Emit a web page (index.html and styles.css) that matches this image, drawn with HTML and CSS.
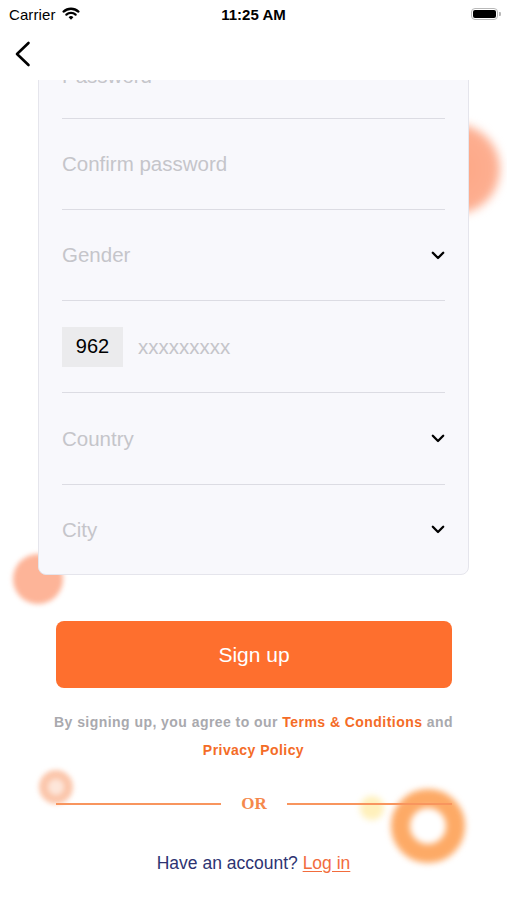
FILE: index.html
```html
<!DOCTYPE html>
<html lang="en">
<head>
<meta charset="utf-8">
<title>Sign up</title>
<link rel="stylesheet" href="styles.css">
</head>
<body>
<div class="page">
  <header class="top">
    <div class="status">
      <div class="status-left">
        <span class="carrier">Carrier</span>
        <svg class="wifi" width="18" height="13" viewBox="0 0 18 13">
          <path d="M1.6 4.6 A11 11 0 0 1 16.4 4.6" fill="none" stroke="#000" stroke-width="2.3" stroke-linecap="round"/>
          <path d="M4.4 7.6 A6.8 6.8 0 0 1 13.6 7.6" fill="none" stroke="#000" stroke-width="2.3" stroke-linecap="round"/>
          <path d="M6.6 10.2 A3.4 3.4 0 0 1 11.4 10.2 L9 12.8 Z" fill="#000"/>
        </svg>
      </div>
      <span class="time">11:25 AM</span>
      <div class="battery"><span class="battery-fill"></span><span class="battery-nub"></span></div>
    </div>
    <nav class="navbar">
      <svg class="back" width="18" height="26" viewBox="0 0 18 26">
        <path d="M14.5 2 L3 13 L14.5 24" fill="none" stroke="#000" stroke-width="2.6" stroke-linecap="round" stroke-linejoin="round"/>
      </svg>
    </nav>
  </header>

  <main class="scroll">
    <span class="blob blob-right"></span>
    <span class="blob blob-left"></span>
    <span class="blob ring-small"></span>
    <span class="blob blob-yellow"></span>
    <span class="blob ring-big"></span>

    <section class="card">
      <div class="field first"><span class="ph">Password</span></div>
      <div class="field"><span class="ph">Confirm password</span></div>
      <div class="field">
        <span class="ph">Gender</span>
        <svg class="chev" width="14" height="9" viewBox="0 0 14 9"><path d="M1.8 1.8 L7 7 L12.2 1.8" fill="none" stroke="#000" stroke-width="2.3" stroke-linecap="round" stroke-linejoin="round"/></svg>
      </div>
      <div class="field phone tall">
        <span class="code">962</span>
        <span class="ph num">xxxxxxxxx</span>
      </div>
      <div class="field tall">
        <span class="ph">Country</span>
        <svg class="chev" width="14" height="9" viewBox="0 0 14 9"><path d="M1.8 1.8 L7 7 L12.2 1.8" fill="none" stroke="#000" stroke-width="2.3" stroke-linecap="round" stroke-linejoin="round"/></svg>
      </div>
      <div class="field last">
        <span class="ph">City</span>
        <svg class="chev" width="14" height="9" viewBox="0 0 14 9"><path d="M1.8 1.8 L7 7 L12.2 1.8" fill="none" stroke="#000" stroke-width="2.3" stroke-linecap="round" stroke-linejoin="round"/></svg>
      </div>
    </section>

    <div class="signup" role="button">Sign up</div>

    <p class="terms">By signing up, you agree to our <a class="link">Terms &amp; Conditions</a> and<br><a class="link">Privacy Policy</a></p>

    <div class="divider"><span class="line"></span><span class="or">OR</span><span class="line"></span></div>

    <p class="login">Have an account? <a class="login-link">Log in</a></p>
  </main>
</div>
</body>
</html>
```

FILE: styles.css
```css
* { box-sizing: border-box; }
html, body { margin: 0; padding: 0; background: #fff; }
body { font-family: "Liberation Sans", Arial, sans-serif; color: #000; }

.page {
  position: relative;
  width: 507px;
  height: 900px;
  overflow: hidden;
  display: flex;
  flex-direction: column;
}

.top {
  position: relative;
  z-index: 5;
  background: #fff;
  flex: 0 0 80px;
}

.status {
  height: 28px;
  display: flex;
  align-items: center;
  justify-content: space-between;
  padding: 0 6px 0 9px;
  position: relative;
}
.status-left { display: flex; align-items: center; gap: 6px; }
.carrier { font-size: 15px; letter-spacing: 0.1px; }
.wifi { margin-top: -2px; }
.time {
  position: absolute;
  left: 0; right: 0;
  text-align: center;
  font-size: 15px;
  font-weight: bold;
  pointer-events: none;
}
.battery {
  position: relative;
  width: 27px;
  height: 12px;
  border: 1px solid #b9b9b9;
  border-radius: 4px;
  padding: 1px;
  margin-right: 3px;
}
.battery-fill { display: block; width: 100%; height: 100%; background: #000; border-radius: 2px; }
.battery-nub {
  position: absolute;
  right: -4px; top: 3px;
  width: 2px; height: 4px;
  background: #b9b9b9;
  border-radius: 0 1px 1px 0;
}

.navbar {
  height: 52px;
  display: flex;
  align-items: center;
  padding-left: 14px;
}

.scroll {
  position: relative;
  flex: 1;
  overflow: hidden;
  display: flex;
  flex-direction: column;
}

.blob { position: absolute; border-radius: 50%; z-index: 0; }
.blob-right {
  left: 410px; top: 44px;
  width: 90px; height: 90px;
  background: radial-gradient(circle, #fda684 0%, #fdae90 60%, #fec4ad 100%);
  filter: blur(5px);
}
.blob-left {
  left: 13px; top: 474px;
  width: 50px; height: 50px;
  background: #fdb498;
  filter: blur(2.5px);
}
.ring-small {
  left: 39px; top: 690px;
  width: 34px; height: 34px;
  border: 9px solid #fbc6ab;
  background: #fde6da;
  filter: blur(2.5px);
}
.blob-yellow {
  left: 360px; top: 716px;
  width: 24px; height: 24px;
  background: #fff0bb;
  filter: blur(3px);
}
.ring-big {
  left: 391px; top: 709px;
  width: 74px; height: 74px;
  border: 19px solid #fdaa66;
  background: #fff;
  filter: blur(3px);
}

.card {
  position: relative;
  z-index: 1;
  margin: -53px 38px 0 38px;
  background: #f8f8fc;
  border: 1px solid #e5e5ec;
  border-radius: 8px;
  padding: 0 23px 0 23px;
}
.field {
  height: 91px;
  display: flex;
  align-items: center;
  justify-content: space-between;
  border-bottom: 1px solid #dcdce3;
}
.field.first { padding-top: 5px; }
.field.tall { height: 92px; }
.field.last { border-bottom: none; height: 89px; }
.ph { font-size: 20.5px; color: #c5c5ca; }
.phone { justify-content: flex-start; }
.code {
  width: 61px;
  height: 40px;
  background: #ebebed;
  font-size: 20px;
  display: flex;
  align-items: center;
  justify-content: center;
  margin-right: 15px;
}
.num { font-size: 20.5px; }

.signup {
  position: relative;
  z-index: 1;
  margin: 46px 55px 0 56px;
  height: 67px;
  border-radius: 8px;
  background: #fe6f2e;
  color: #fff;
  font-size: 21px;
  display: flex;
  align-items: center;
  justify-content: center;
}

.terms {
  position: relative;
  z-index: 1;
  margin: 20px 0 0;
  text-align: center;
  font-size: 14px;
  font-weight: bold;
  letter-spacing: 0.45px;
  line-height: 28px;
  color: #a9a9ae;
}
.link { color: #f46c27; }

.divider {
  position: relative;
  z-index: 1;
  margin: 30px 55px 0 56px;
  height: 20px;
  display: flex;
  align-items: center;
  gap: 20px;
}
.line { flex: 1; height: 1.5px; background: #f8955e; }
.or {
  font-family: "Liberation Serif", "Times New Roman", serif;
  font-weight: bold;
  font-size: 17px;
  color: #f5884c;
}

.login {
  position: relative;
  z-index: 1;
  margin: 37px 0 0;
  text-align: center;
  font-size: 17.5px;
  line-height: 24px;
  color: #2d3372;
}
.login-link { color: #f26c3d; text-decoration: underline; text-underline-offset: 2px; }
```
